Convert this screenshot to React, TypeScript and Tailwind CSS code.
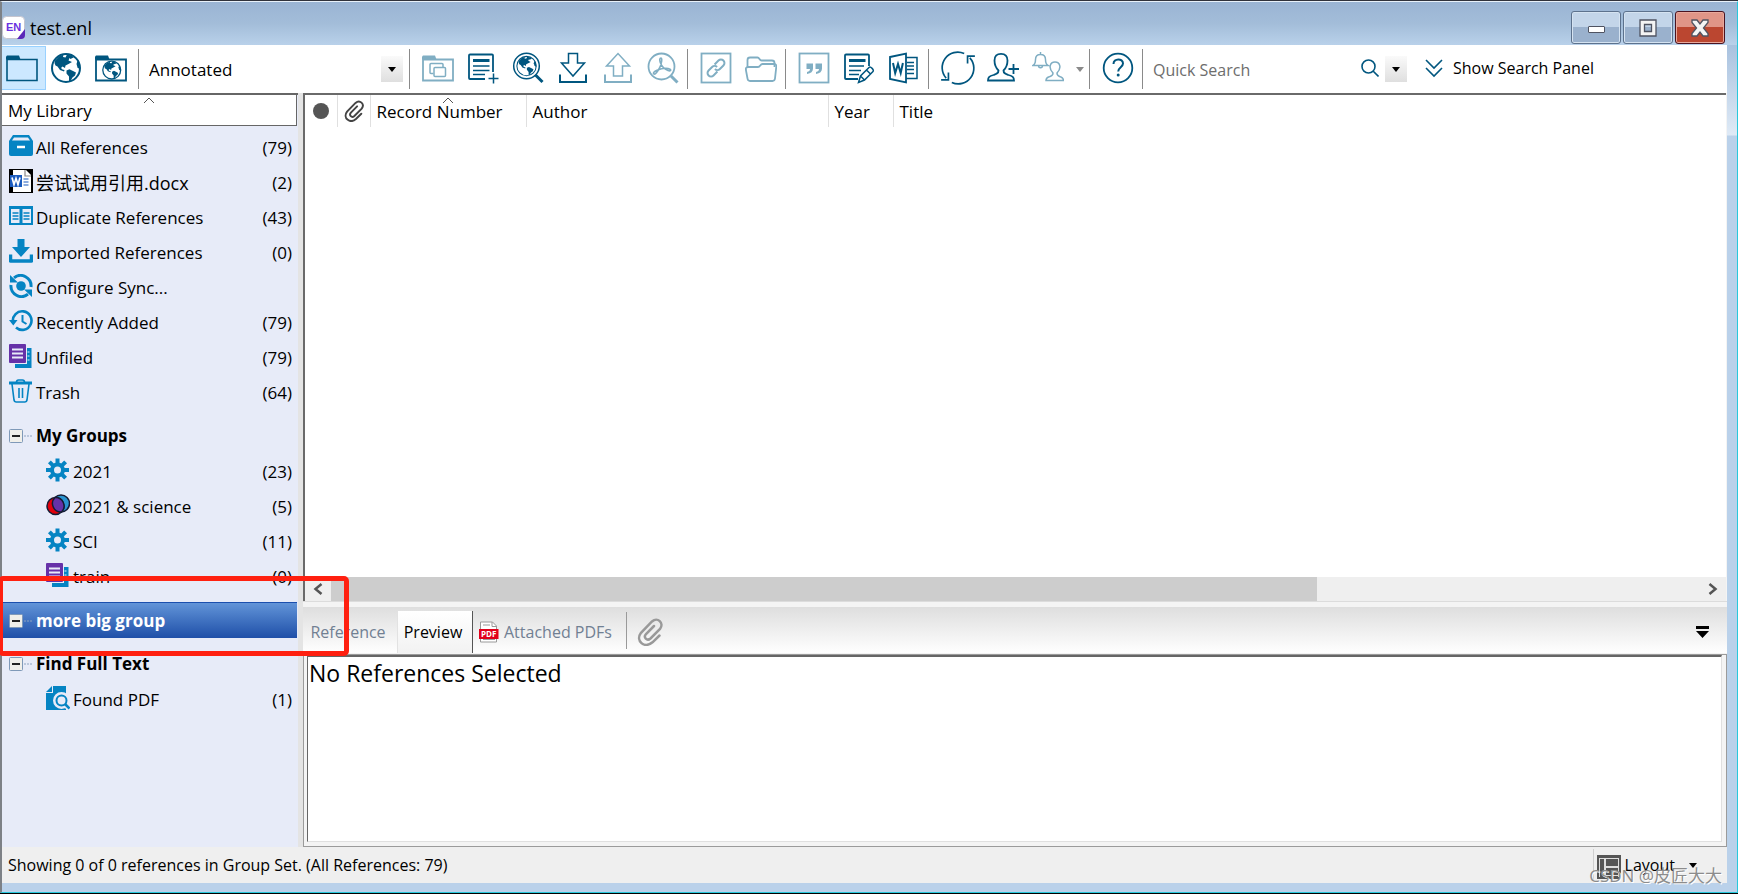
import type { ReactNode } from "react";

type IconProps = { children: ReactNode; className?: string };

function Icon({ children, className = "size-8 text-[#00567f]" }: IconProps) {
  return (
    <svg viewBox="0 0 32 32" className={className} fill="none" stroke="currentColor" strokeWidth="1.5" aria-hidden="true">
      {children}
    </svg>
  );
}

function SideIcon({ children }: { children: ReactNode }) {
  return (
    <svg viewBox="0 0 24 24" className="size-6 shrink-0 text-[#0584c3]" fill="none" stroke="currentColor" strokeWidth="2" aria-hidden="true">
      {children}
    </svg>
  );
}

function Continents() {
  return (
    <g fill="currentColor" stroke="none">
      <path d="M5 8.5 9 4.5 13.5 2.5 13 5 15.5 5.5 17 2.5 21.5 3.5 23.5 5.5 20.5 7 19.5 6 18.5 8.5 22 10 18.5 12 15.5 13.5 15 16 12.5 14.5 11 16 12.5 17.5 14.5 18 14 19.5 10 18 7.5 14.5 5.5 13.5 4.5 11Z" />
      <path d="M16.5 18.5 19.5 17.3 22.5 18.8 26 20.5 25 23.5 22.5 25.5 20.5 29 19 29.3 19 24.5 16.5 21.5Z" />
      <path d="M27.5 8.5 30 13 30 17.5 27.5 15.5 26.5 12Z" />
    </g>
  );
}

function Globe() {
  return (
    <>
      <circle cx="16" cy="16" r="14" strokeWidth="2" />
      <Continents />
    </>
  );
}

const icons = {
  folder: (
    <Icon>
      <path d="M1 7.5h30v21H1z" strokeWidth="1.6" />
      <path d="M0 4.5 1 3.5h12l1.5 4H0z" fill="currentColor" stroke="none" />
    </Icon>
  ),
  globe: <Icon><Globe /></Icon>,
  folderGlobe: (
    <Icon>
      <path d="M1 7.5h30v21H1z" strokeWidth="1.8" />
      <path d="M0 4.5 1 3.5h12l1.5 4H0z" fill="currentColor" stroke="none" />
      <g transform="translate(6.5 7.8) scale(.64)"><Globe /></g>
    </Icon>
  ),
  copyGroup: (
    <Icon className="size-8 text-[#80aec3]">
      <path d="M1 7.5h30v21H1z" strokeWidth="1.8" />
      <path d="M0 4.5 1 3.5h12l1.5 4H0z" fill="currentColor" stroke="none" />
      <path d="M11.5 21.5H9a1 1 0 0 1-1-1v-8a1 1 0 0 1 1-1h11a1 1 0 0 1 1 1v2.5" />
      <rect x="12" y="15.5" width="11.5" height="9" rx="1" />
    </Icon>
  ),
  newRef: (
    <Icon>
      <path d="M26 20V3.5a1 1 0 0 0-1-1H3a1 1 0 0 0-1 1V26a1 1 0 0 0 1 1h15" strokeWidth="1.8" />
      <path d="M6 8.5h16.5" strokeWidth="3" />
      <path d="M6 14h16.5M6 18.5h16.5M6 22.5h12M26.5 21.5v10M21.5 26.5h10" />
    </Icon>
  ),
  onlineSearch: (
    <Icon>
      <circle cx="14.5" cy="14" r="12.8" />
      <g transform="translate(3.5 3) scale(.69)"><Continents /><circle cx="16" cy="16" r="14" strokeWidth="1.5" /></g>
      <path d="m23.5 23 7 7" strokeWidth="3" />
    </Icon>
  ),
  importFile: (
    <Icon>
      <path d="M11.5 1.5h9v9.5h7L16 24 4.5 11h7z" />
      <path d="M3 22.5V30h26v-7.5" strokeWidth="2" />
    </Icon>
  ),
  exportFile: (
    <Icon className="size-8 text-[#80aec3]">
      <path d="M11.5 24v-10h-7L16 1.5 27.5 14h-7v10z" />
      <path d="M3 22.5V30h26v-7.5" strokeWidth="2" />
    </Icon>
  ),
  fullText: (
    <Icon className="size-8 text-[#80aec3]">
      <circle cx="14.5" cy="14.5" r="13" strokeWidth="1.8" />
      <path d="m24 24 6.5 6.5" strokeWidth="3" />
      <path d="M14 6c-1.5 0-1.5 2-.7 4.5 1.200 3.5 4 6.5 7.7 8 2.5 1 3.5-.5 2-1.3-3-1.5-9-.7-13 1-3 1.3-4.2 3-3.2 3.7 1.5 1 4-2.5 6-6.5 1.5-3 2.8-9.4 1.2-9.4Z" strokeWidth="1.6" />
    </Icon>
  ),
  link: (
    <Icon className="size-8 text-[#80aec3]">
      <rect x="1.5" y="1.5" width="29" height="29" strokeWidth="1.8" />
      <g transform="rotate(-45 16 16)" strokeWidth="2">
        <path d="M14.5 19.5H9a3.5 3.5 0 0 1 0-7h5a3.5 3.5 0 0 1 3.5 3.5" />
        <path d="M17.5 12.5H23a3.5 3.5 0 0 1 0 7h-5a3.5 3.5 0 0 1-3.5-3.5" />
      </g>
    </Icon>
  ),
  openFile: (
    <Icon className="size-8 text-[#80aec3]">
      <path d="M2.5 15V8c0-1.5.8-2.5 2.5-2.5h7.5c2 0 2 3 4 3H27c1.5 0 2.5 1 2.5 2.5v4" strokeWidth="1.8" />
      <path d="M3.5 15H13c2.5 0 2-3 4.5-3H29c1.5 0 2.5 1 2.3 2.5l-1.3 12c-.2 1.5-1 2.5-2.5 2.5H5c-1.5 0-2.3-1-2.5-2.5L.8 17.5c-.2-1.5 1-2.5 2.7-2.5Z" strokeWidth="1.8" />
    </Icon>
  ),
  citation: (
    <Icon className="size-8 text-[#80aec3]">
      <rect x="1.5" y="1.5" width="29" height="29" strokeWidth="1.8" />
      <path d="M8.5 11.5h6.5v5c0 3-2 5-6 5.5v-2c2-.5 3-1.5 3-3H8.5zM17.5 11.5H24v5c0 3-2 5-6 5.5v-2c2-.5 3-1.5 3-3h-3.5z" fill="currentColor" stroke="none" />
    </Icon>
  ),
  editRef: (
    <Icon>
      <path d="M26 14V3.5a1 1 0 0 0-1-1H3a1 1 0 0 0-1 1V26a1 1 0 0 0 1 1h12" strokeWidth="1.8" />
      <path d="M6 8.5h16.5" strokeWidth="3" />
      <path d="M6 14h15M6 18.5h12M6 22.5h10" />
      <path d="m15.5 30.5 2-6.5 8.5-8.5c1.5-1.5 5.5 2.5 4 4L21.5 28zM23.5 18l4.5 4.5M17.5 24l4 4" />
    </Icon>
  ),
  word: (
    <Icon>
      <path d="M2 5 18 1.5v29L2 27z" strokeWidth="1.8" />
      <path d="M18 5.5h11v21H18M19 10.5h7M19 14h7M19 17.5h7M19 21.5h7" strokeWidth="1.5" />
      <path d="m5 11 2.2 10L10 12l2.7 9 2.200-10" strokeWidth="2" />
    </Icon>
  ),
  help: (
    <Icon>
      <circle cx="16" cy="16" r="14.3" strokeWidth="1.8" />
      <path d="M11.5 12c0-6 9.5-6 9.5-.5 0 3.5-4.8 4-4.8 8" strokeWidth="2" />
      <circle cx="16.2" cy="23" r="1.5" fill="currentColor" stroke="none" />
    </Icon>
  ),
  sync: (
    <Icon className="size-9 text-[#00567f]">
      <path d="M21.5 3.2A13.8 13.8 0 0 0 5.5 25M10.5 28.8A13.8 13.8 0 0 0 26.5 7" />
      <path d="M24.5 12V5.500h6.500M7.500 20v6.500H1" />
    </Icon>
  ),
  addUser: (
    <Icon>
      <path d="M11.5 18.5c-3-3-4-6-4-10C7.5 4 10 1.8 14 1.8s6.5 2.200 6.5 6.7c0 4-1 7-4 10 0 3 2 3.5 5 4.5 4 1 5.5 2 5.5 5.5H1c0-3.5 1.5-4.5 5.5-5.5 3-1 5-1.5 5-4.5Z" strokeWidth="1.8" />
      <path d="M26.5 12v10M21.5 17H32" strokeWidth="1.8" />
    </Icon>
  ),
  activity: (
    <Icon className="size-8 text-[#80aec3]">
      <path d="M1 13.5c2-1.2 2.5-3 2.5-6 0-3.5 2-5 5-5s5 1.5 5 5c0 3 .5 4.8 2.5 6zM8.5 0v2.5M6.5 13.5c0 3 4 3 4 0" />
      <path d="M21 21c-5-5-3-11 2-11s7 6 2 11c0 3 1.5 3 3.5 3.8 2.2.8 3 1.7 3 3.7H14c0-2 .8-2.900 3-3.7 2-.8 4-.8 4-3.8Z" />
    </Icon>
  ),
};

const gear = (
  <SideIcon>
    <circle cx="11.500" cy="12" r="5.5" strokeWidth="4" />
    <path d="M11.5.5v5M11.5 18.5v5M0 12h5M18 12h5M3.400 3.900l3.500 3.500M16.100 16.600l3.500 3.500M19.600 3.900l-3.500 3.500M6.900 16.600l-3.500 3.500" strokeWidth="4" />
  </SideIcon>
);

const group = (
  <SideIcon>
    <path d="M18 4h4.5v20H6v-4h12z" fill="currentColor" stroke="none" />
    <path d="M19.5 7.5v1M19.5 11.5v1M19.5 15.5v1" stroke="#e7ebf8" strokeWidth="2" />
    <rect width="17" height="19" fill="#6631a8" stroke="none" rx="1" />
    <path d="M3 5.5h11M3 9.5h11M3 13.5h11" stroke="#e7ebf8" strokeWidth="1.8" />
  </SideIcon>
);

const libraryItems = [
  {
    name: "All References",
    count: 79,
    icon: (
      <SideIcon>
        <path d="M4 1h16l4 6v13a2 2 0 0 1-2 2H2a2 2 0 0 1-2-2V7z" fill="currentColor" stroke="none" />
        <path d="M5 3.5h14l2 3H3z" fill="#e7ebf8" stroke="none" />
        <path d="M8 13h8" stroke="#fff" strokeWidth="2.5" />
      </SideIcon>
    ),
  },
  {
    name: "尝试试用引用.docx",
    count: 2,
    icon: (
      <SideIcon>
        <path d="M0 0h24v24H0z" fill="#000" stroke="none" />
        <path d="M4 1h13l5 5v17H4z" fill="#fff" stroke="none" />
        <path d="M16 1v6h6" stroke="#888" strokeWidth="1.2" />
        <path d="M1 6h12v12H1z" fill="#1b5bbe" stroke="none" />
        <path d="m3 8.5 2 7 2-6 2 6 2-7" stroke="#fff" strokeWidth="1.7" />
        <path d="M14.5 10h5M14.5 13h5M14.5 16h5" stroke="#1b5bbe" strokeWidth="1.2" />
      </SideIcon>
    ),
  },
  {
    name: "Duplicate References",
    count: 43,
    icon: (
      <SideIcon>
        <path d="M1 4h10.5v16H1zM12.5 4H23v16H12.5z" />
        <path d="M0 3.5h24" strokeWidth="3" />
        <path d="M3.5 9h6M3.5 12h6M3.5 15h6M14.5 9h6M14.5 12h6M14.5 15h6" strokeWidth="1.5" />
      </SideIcon>
    ),
  },
  {
    name: "Imported References",
    count: 0,
    icon: (
      <SideIcon>
        <path d="M8.5 0h7v8H21l-9 10L3 8h5.5z" fill="currentColor" stroke="none" />
        <path d="M1.5 15.5V22h21v-6.5" strokeWidth="3.5" strokeLinejoin="round" />
      </SideIcon>
    ),
  },
  {
    name: "Configure Sync...",
    count: null,
    icon: (
      <SideIcon>
        <circle cx="12" cy="12" r="4.8" fill="currentColor" stroke="none" />
        <path d="M5 3.8A10.5 10.5 0 0 1 22 13M19 20.2A10.5 10.5 0 0 1 2 11" strokeWidth="3" />
        <path d="M1 1v7.5h8zM23 23v-7.5h-8z" fill="currentColor" stroke="none" />
      </SideIcon>
    ),
  },
  {
    name: "Recently Added",
    count: 79,
    icon: (
      <SideIcon>
        <path d="M4 13A9.3 9.3 0 1 1 7 18.5" strokeWidth="2.6" />
        <path d="M0 11h8.5l-4.2 5.5z" fill="currentColor" stroke="none" />
        <path d="M13.5 6v6.5l4 2.5" />
      </SideIcon>
    ),
  },
  { name: "Unfiled", count: 79, icon: group },
  {
    name: "Trash",
    count: 64,
    icon: (
      <SideIcon>
        <path d="M0 4h23" strokeWidth="3" />
        <path d="M7.5 3.5C7.5 1.5 8.5 1 9.5 1h4c1 0 2 .5 2 2.5M3 5l2 16c.2 1.2 1 2 2 2h9c1 0 1.8-.8 2-2l2-16M10 9v10M13.5 9v10" strokeWidth="1.6" />
      </SideIcon>
    ),
  },
];

const groupSets = [
  {
    name: "My Groups",
    selected: false,
    items: [
      { name: "2021", count: 23, icon: gear },
      {
        name: "2021 & science",
        count: 5,
        icon: (
          <SideIcon>
            <circle cx="15" cy="10.5" r="8.5" fill="#2994d1" stroke="#151c35" strokeWidth="1.5" />
            <circle cx="9.5" cy="13" r="8.5" fill="#e3000b" stroke="#151c35" strokeWidth="1.5" />
            <path d="M9 4.5A8.5 8.5 0 0 1 15.500 19A8.5 8.5 0 0 1 9 4.5Z" fill="#6631a8" stroke="#151c35" strokeWidth="1.5" />
          </SideIcon>
        ),
      },
      { name: "SCI", count: 11, icon: gear },
      { name: "train", count: 0, icon: group },
    ],
  },
  { name: "more big group", selected: true, items: [] },
  {
    name: "Find Full Text",
    selected: false,
    items: [
      {
        name: "Found PDF",
        count: 1,
        icon: (
          <SideIcon>
            <path d="M7 0h13v24H0V7h7z" fill="currentColor" stroke="none" />
            <path d="M0 6 6 0v6z" fill="currentColor" stroke="none" />
            <path d="m19.5 19 4 4" stroke="#e7ebf8" strokeWidth="5" />
            <circle cx="15.5" cy="14.5" r="6" fill="#0584c3" stroke="#e7ebf8" strokeWidth="5" />
            <circle cx="15.5" cy="14.5" r="5" fill="#e7ebf8" />
            <path d="m19 18 4.5 4.5" strokeWidth="2.5" />
          </SideIcon>
        ),
      },
    ],
  },
];

function Separator() {
  return <span className="my-[3px] w-px shrink-0 self-stretch bg-[#8a8a8a]" />;
}

function ToolButton({ label, icon }: { label: string; icon: ReactNode }) {
  return (
    <button type="button" aria-label={label} className="flex h-11 w-[45px] shrink-0 items-center justify-center">
      {icon}
    </button>
  );
}

function ModeButton({ label, icon, active = false }: { label: string; icon: ReactNode; active?: boolean }) {
  return (
    <button
      type="button"
      aria-label={label}
      aria-pressed={active}
      className={
        active
          ? "flex h-11 w-11 shrink-0 items-center border border-l-0 border-[#99d1ff] bg-[#cce8ff] pl-1"
          : "flex h-11 w-[45px] shrink-0 items-center pl-1"
      }
    >
      {icon}
    </button>
  );
}

function DownArrow({ className = "w-2 text-black" }: { className?: string }) {
  return (
    <svg viewBox="0 0 8 5" className={className} aria-hidden="true">
      <path d="M0 0h8L4 5z" fill="currentColor" />
    </svg>
  );
}

function SortCaret() {
  return (
    <svg viewBox="0 0 12 7" className="absolute top-[2px] left-1/2 w-3 -translate-x-1/2 text-[#555]" fill="none" stroke="currentColor" aria-hidden="true">
      <path d="m1 6 5-5 5 5" />
    </svg>
  );
}

function Paperclip({ className }: { className: string }) {
  return (
    <svg viewBox="0 0 26 28" className={className} fill="none" stroke="currentColor" strokeWidth="2.5" strokeLinecap="round" aria-hidden="true">
      <path d="m22.5 17.5-7 6.8c-8 7-17.5-1.5-11.5-9.5L15 3.5c5.5-5 12.5 1.5 8 7.5L13.5 20.5c-3.5 3-7.5-1-4.5-4.5l8-8" />
    </svg>
  );
}

function SidebarRow({ name, count, icon, nested = false }: { name: string; count: number | null; icon: ReactNode; nested?: boolean }) {
  return (
    <li>
      <button
        type="button"
        className={nested ? "flex h-[35px] w-full items-center pr-[6px] pl-[44px] text-left" : "flex h-[35px] w-full items-center pr-[6px] pl-[7px] text-left"}
      >
        <span className="flex w-[27px] shrink-0 pb-1">{icon}</span>
        <span className={name.endsWith(".docx") ? "flex-1 text-[18px]" : "flex-1"}>{name}</span>
        {count !== null && <span>({count})</span>}
      </button>
    </li>
  );
}

function TitleBar() {
  return (
    <header className="flex h-[43px] shrink-0 items-center justify-between bg-linear-to-b from-[#9ab4d4] via-[#a3bdd9] to-[#b9d1ea]">
      <div className="flex items-center gap-1 pt-2">
        <svg viewBox="0 0 24 24" className="size-6" aria-hidden="true">
          <rect x=".5" y=".5" width="22" height="22" rx="4" fill="#fff" stroke="#c5c5cf" />
          <path d="m15 23 8-10v6a4 4 0 0 1-4 4z" fill="#5a27b8" />
          <text x="4" y="15" fontSize="11" fontWeight="700" fill="#6a31e0" fontFamily="Liberation Sans, sans-serif">EN</text>
        </svg>
        <h1 className="text-[18px]">test.enl</h1>
      </div>
      <div className="flex gap-[2px] pt-2 pr-3">
        <button type="button" aria-label="Minimize" className="flex h-[33px] w-[50px] items-center justify-center rounded-[3px] border border-[#5d728d] bg-linear-to-b from-[#c3d5e9] from-50% to-[#9ab1cd] to-50% shadow-[inset_0_0_0_1px_#d5e3f1]">
          <span className="mt-1 h-[7px] w-[17px] rounded-[1px] border border-[#4f5361] bg-white" />
        </button>
        <button type="button" aria-label="Maximize" className="flex h-[33px] w-[50px] items-center justify-center rounded-[3px] border border-[#5d728d] bg-linear-to-b from-[#c3d5e9] from-50% to-[#9ab1cd] to-50% shadow-[inset_0_0_0_1px_#d5e3f1]">
          <svg viewBox="0 0 18 18" className="size-[18px]" aria-hidden="true">
            <path d="M1 1h16v16H1zM5.5 5.5v7h7v-7z" fill="#f4f4f4" fillRule="evenodd" stroke="#4f5361" strokeWidth="1.3" />
          </svg>
        </button>
        <button type="button" aria-label="Close" className="flex h-[33px] w-[50px] items-center justify-center rounded-[3px] border border-[#4a1320] bg-linear-to-b from-[#e09587] from-50% to-[#bb4630] to-50% shadow-[inset_0_0_0_1px_#e8a99c]">
          <svg viewBox="0 0 18 18" className="size-[18px]" aria-hidden="true">
            <path d="M1 1h5l3 4 3-4h5v2.5L12.5 9l4.5 5.5V17h-5l-3-4-3 4H1v-2.5L5.5 9 1 3.5z" fill="#f4f4f4" stroke="#4f5361" strokeWidth="1.3" />
          </svg>
        </button>
      </div>
    </header>
  );
}

function Toolbar() {
  return (
    <div className="flex h-12 shrink-0 bg-white py-px text-[16px]">
      <div className="flex pr-[2px]">
        <ModeButton label="Local library" icon={icons.folder} active />
        <ModeButton label="Online search" icon={icons.globe} />
        <ModeButton label="Integrated library" icon={icons.folderGlobe} />
      </div>
      <Separator />
      <div className="relative flex w-[270px] shrink-0 items-center">
        <select aria-label="Output style" className="h-full w-full appearance-none bg-transparent pt-[2px] pl-[10px] text-[17px] outline-none">
          <option>Annotated</option>
        </select>
        <span className="pointer-events-none absolute right-[6px] flex h-[26px] w-[22px] items-center justify-center bg-linear-to-b from-[#fafafa] to-[#dfdfdf]">
          <DownArrow />
        </span>
      </div>
      <Separator />
      <div className="flex pr-[2px] pl-[5px]">
        <ToolButton label="Copy to group" icon={icons.copyGroup} />
        <ToolButton label="New reference" icon={icons.newRef} />
        <ToolButton label="Search online" icon={icons.onlineSearch} />
        <ToolButton label="Import" icon={icons.importFile} />
        <ToolButton label="Export" icon={icons.exportFile} />
        <ToolButton label="Find full text" icon={icons.fullText} />
      </div>
      <Separator />
      <div className="flex pr-[2px] pl-[5px]">
        <ToolButton label="Open link" icon={icons.link} />
        <ToolButton label="Open file" icon={icons.openFile} />
      </div>
      <Separator />
      <div className="flex pr-[2px] pl-[5px]">
        <ToolButton label="Insert citation" icon={icons.citation} />
        <ToolButton label="Edit reference" icon={icons.editRef} />
        <ToolButton label="Go to Word" icon={icons.word} />
      </div>
      <Separator />
      <div className="flex pl-[6px]">
        <ToolButton label="Sync library" icon={icons.sync} />
        <ToolButton label="Share library" icon={icons.addUser} />
        <ToolButton label="Activity feed" icon={icons.activity} />
        <button type="button" aria-label="Activity options" className="flex w-[19px] items-center justify-center">
          <DownArrow className="w-2 text-[#8a8a8a]" />
        </button>
      </div>
      <Separator />
      <div className="flex pr-[2px] pl-[5px]">
        <ToolButton label="Help" icon={icons.help} />
      </div>
      <Separator />
      <label className="flex w-[236px] items-center pt-[2px] pl-[10px]">
        <input type="text" aria-label="Quick Search" placeholder="Quick Search" className="min-w-0 flex-1 outline-none placeholder:text-[#6d6d6d]" />
        <svg viewBox="0 0 18 18" className="mb-1 size-[18px] text-[#00567f]" fill="none" stroke="currentColor" strokeWidth="1.6" aria-hidden="true">
          <circle cx="7.5" cy="7.5" r="6.5" />
          <path d="m12 12 5.5 5.5" />
        </svg>
      </label>
      <button type="button" aria-label="Search options" className="ml-[6px] flex h-[26px] w-[22px] items-center justify-center self-center bg-linear-to-b from-[#fafafa] to-[#dfdfdf]">
        <DownArrow />
      </button>
      <button type="button" className="ml-[18px] flex items-center gap-[10px] pb-[2px] whitespace-nowrap">
        <svg viewBox="0 0 18 20" className="h-5 w-[18px] text-[#00567f]" fill="none" stroke="currentColor" strokeWidth="1.6" aria-hidden="true">
          <path d="m1 2 8 8 8-8M1 10l8 8 8-8" />
        </svg>
        Show Search Panel
      </button>
    </div>
  );
}

function Sidebar() {
  return (
    <nav className="flex w-[296px] shrink-0 flex-col border-t-2 border-[#666] bg-[#e7ebf8]">
      <h2 className="relative h-[31px] w-[295px] border-r border-b border-[#666] bg-white pt-1 pl-[6px] leading-6">
        My Library
        <SortCaret />
      </h2>
      <ul className="pt-1">
        {libraryItems.map((item) => (
          <SidebarRow key={item.name} {...item} />
        ))}
      </ul>
      {groupSets.map((set) => (
        <section key={set.name} className="pt-2">
          <button
            type="button"
            className={
              set.selected
                ? "flex h-9 w-[295px] items-center border-t border-[#1b4fae] bg-linear-to-b from-[#6294d8] to-[#1f4fa8] pl-[7px] font-bold text-white"
                : "flex h-9 w-[295px] items-center pl-[7px] font-bold"
            }
          >
            <svg viewBox="0 0 24 14" className="mr-[3px] h-[14px] w-6" aria-hidden="true">
              <rect x=".5" y=".5" width="13" height="13" rx="1" fill="#f0efea" stroke="#7f99b8" />
              <path d="M3 7h8" stroke="#222" strokeWidth="2" />
              <path d="M15 7h9" stroke="#8da3c0" strokeDasharray="2 1" />
            </svg>
            {set.name}
          </button>
          <ul>
            {set.items.map((item) => (
              <SidebarRow key={item.name} {...item} nested />
            ))}
          </ul>
        </section>
      ))}
    </nav>
  );
}

function ReferenceList() {
  return (
    <div className="mr-px flex flex-1 flex-col border-t-2 border-l-2 border-[#6a6a6a] bg-white">
      <table className="w-full table-fixed text-left">
        <thead>
          <tr className="h-8">
            <th className="w-8 border-r border-[#e0e0e0] pl-2">
              <svg viewBox="0 0 16 16" className="size-4 text-[#555]" role="img" aria-label="Read status">
                <circle cx="8" cy="8" r="8" fill="currentColor" />
              </svg>
            </th>
            <th className="w-[33px] border-r border-[#e0e0e0]">
              <Paperclip className="mx-auto h-[22px] w-5 text-[#444]" />
            </th>
            <th className="relative w-[156px] border-r border-[#e0e0e0] pt-px pl-[6px] font-normal">
              Record Number
              <SortCaret />
            </th>
            <th className="w-[302px] border-r border-[#e0e0e0] pt-px pl-[6px] font-normal">Author</th>
            <th className="w-[65px] border-r border-[#e0e0e0] pt-px pl-[6px] font-normal">Year</th>
            <th className="pt-px pl-[6px] font-normal">Title</th>
          </tr>
        </thead>
      </table>
      <div className="mt-auto flex h-6 bg-[#efefef]">
        <button type="button" aria-label="Scroll left" className="flex w-[26px] items-center justify-center">
          <svg viewBox="0 0 10 12" className="h-3 w-[10px]" fill="none" stroke="#555" strokeWidth="2.5" aria-hidden="true">
            <path d="M8.5 1 2.5 6l6 5" />
          </svg>
        </button>
        <div className="flex-1">
          <div className="h-full w-[72%] bg-[#cdcdcd]" />
        </div>
        <button type="button" aria-label="Scroll right" className="flex w-[26px] items-center justify-center">
          <svg viewBox="0 0 10 12" className="h-3 w-[10px]" fill="none" stroke="#555" strokeWidth="2.5" aria-hidden="true">
            <path d="m1.5 1 6 5-6 5" />
          </svg>
        </button>
      </div>
    </div>
  );
}

function PreviewTabs() {
  return (
    <div className="flex h-[46px] shrink-0 items-end bg-linear-to-b from-[#dedede] to-white text-[16px] text-[#718093]">
      <button type="button" className="h-[42px] w-[95px] border-r border-[#e2e2e2] pr-1">Reference</button>
      <button type="button" className="h-[42px] w-[75px] border-r border-[#555] bg-linear-to-b from-white to-[#f2f2f2] pr-1 text-black">
        Preview
      </button>
      <button type="button" className="flex h-[42px] w-[153px] items-center gap-[5px] pl-[6px] whitespace-nowrap">
        <svg viewBox="0 0 20 22" className="h-[22px] w-5" aria-hidden="true">
          <path d="M1.5 1h12l4 4v16h-16z" fill="#fff" stroke="#9a9a9a" />
          <path d="M13 1v4.5h5M4 4h7M4 18.5h12" fill="none" stroke="#9a9a9a" />
          <path d="M0 8h19.5v10H0z" fill="#e2001a" />
          <text x="2" y="16" fontSize="8" fontWeight="700" fill="#fff" fontFamily="Open Sans, sans-serif">PDF</text>
        </svg>
        Attached PDFs
      </button>
      <span className="mb-1 h-[37px] w-px bg-[#9a9a9a]" />
      <button type="button" aria-label="Attach file" className="ml-[10px] flex h-[42px] items-center">
        <Paperclip className="h-7 w-[26px] text-[#999]" />
      </button>
      <button type="button" aria-label="Panel menu" className="mr-[18px] ml-auto flex h-[42px] items-center">
        <svg viewBox="0 0 13 12" className="h-3 w-[13px]" aria-hidden="true">
          <path d="M0 0h13v3H0zM0 5h13l-6.5 7z" />
        </svg>
      </button>
    </div>
  );
}

function StatusBar() {
  return (
    <footer className="flex h-9 shrink-0 items-center justify-between bg-[#efefef] pr-[30px] pl-[6px] text-[16px]">
      <p>Showing 0 of 0 references in Group Set. (All References: 79)</p>
      <button type="button" className="flex h-8 items-center gap-1 border-l border-[#cfcfcf] pl-[3px]">
        <svg viewBox="0 0 24 24" className="mt-1 size-6" aria-hidden="true">
          <path d="M0 0h24v24H0z" fill="#555" />
          <path d="M2 3h20v1H2zM2 4h1v18H2zM7 4h2v18H7zM9 11h13v2H9zM9 20h13v1H9zM21 4h1v18h-1z" fill="#ddd" />
        </svg>
        Layout
        <span className="ml-[10px]"><DownArrow /></span>
      </button>
    </footer>
  );
}

export default function App() {
  return (
    <div className="relative flex min-h-screen flex-col overflow-hidden border-t border-b border-t-[#30323c] border-b-black bg-[linear-gradient(#9ab4d4,#a9c2df_45px,#dfeaf6_134px,#bad1ea_135px)] font-['Open_Sans','Noto_Sans_CJK_SC',sans-serif] text-[17px] leading-6 text-black">
      <div className="flex flex-1 flex-col border-t border-r border-b border-l-2 border-t-[#e8f1fa] border-r-[#28c8dc] border-b-[#28c8dc] border-l-[#7d8186]">
        <TitleBar />
        <div className="mr-[10px] mb-[9px] flex flex-1 flex-col">
          <Toolbar />
          <div className="flex flex-1">
            <Sidebar />
            <main className="flex flex-1 flex-col border-l-[5px] border-[#e4e4e4] bg-[#f4f4f4]">
              <ReferenceList />
              <div className="h-[6px] shrink-0 border-t border-[#dcdcdc]" />
              <PreviewTabs />
              <section className="mt-px h-[193px] shrink-0 border border-[#9b9b9b] bg-[#f4f4f4] pr-1 pb-1 pl-[3px]">
                <div className="h-full border border-t-2 border-[#e0e0e0] border-t-[#666] border-l-[#666] bg-white pl-px">
                  <p className="text-[23px] leading-8">No References Selected</p>
                </div>
              </section>
            </main>
          </div>
          <StatusBar />
        </div>
      </div>

      {/* callout round the selected group set */}
      <div className="pointer-events-none absolute top-[575px] -left-[2px] h-20 w-[351px] rounded-[5px] border-[5px] border-[#ff2010]" />
      <p className="pointer-events-none absolute right-4 bottom-[5px] text-[17px] text-[#8c8c8c] [text-shadow:1px_1px_0_#fff]">CSDN @皮匠大大</p>
    </div>
  );
}
